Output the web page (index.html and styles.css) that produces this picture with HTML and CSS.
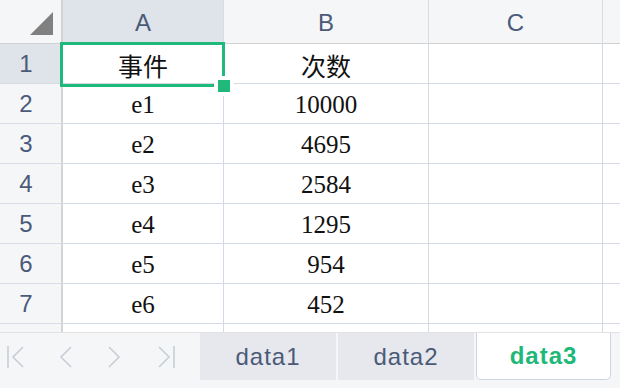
FILE: index.html
```html
<!DOCTYPE html>
<html>
<head>
  <title>Sheet</title>
  <link rel="stylesheet" href="styles.css">
</head>
<body>

  <div class="sheet">
    <!-- Grid -->
    <div class="grid">
      <div class="corner"><span class="corner-mark"></span></div>
      <div class="col-head selected">A</div>
      <div class="col-head">B</div>
      <div class="col-head">C</div>
      <div class="col-head last"></div>

      <div class="row-head selected">1</div>
      <div class="cell">事件</div>
      <div class="cell">次数</div>
      <div class="cell"></div>
      <div class="cell last"></div>

      <div class="row-head">2</div>
      <div class="cell">e1</div>
      <div class="cell">10000</div>
      <div class="cell"></div>
      <div class="cell last"></div>

      <div class="row-head">3</div>
      <div class="cell">e2</div>
      <div class="cell">4695</div>
      <div class="cell"></div>
      <div class="cell last"></div>

      <div class="row-head">4</div>
      <div class="cell">e3</div>
      <div class="cell">2584</div>
      <div class="cell"></div>
      <div class="cell last"></div>

      <div class="row-head">5</div>
      <div class="cell">e4</div>
      <div class="cell">1295</div>
      <div class="cell"></div>
      <div class="cell last"></div>

      <div class="row-head">6</div>
      <div class="cell">e5</div>
      <div class="cell">954</div>
      <div class="cell"></div>
      <div class="cell last"></div>

      <div class="row-head">7</div>
      <div class="cell">e6</div>
      <div class="cell">452</div>
      <div class="cell"></div>
      <div class="cell last"></div>

      <div class="row-head">8</div>
      <div class="cell"></div>
      <div class="cell"></div>
      <div class="cell"></div>
      <div class="cell last"></div>

      <!-- selection box over A1 -->
      <div class="selection"></div>
      <div class="fill-handle"></div>
    </div>

    <!-- Sheet tabs -->
    <div class="tabbar">
      <div class="nav">
        <svg width="20" height="24" viewBox="0 0 20 24"><path d="M2 1v22M17 2L7 12l10 10" fill="none" stroke="#c9cdd5" stroke-width="1.6"/></svg>
        <svg width="14" height="24" viewBox="0 0 14 24"><path d="M12 2L2 12l10 10" fill="none" stroke="#c9cdd5" stroke-width="1.6"/></svg>
        <svg width="14" height="24" viewBox="0 0 14 24"><path d="M2 2l10 10L2 22" fill="none" stroke="#c9cdd5" stroke-width="1.6"/></svg>
        <svg width="20" height="24" viewBox="0 0 20 24"><path d="M2 2l10 10L2 22M17 1v22" fill="none" stroke="#c9cdd5" stroke-width="1.6"/></svg>
      </div>
      <div class="tab">data1</div>
      <div class="tab">data2</div>
      <div class="tab active">data3</div>
    </div>
  </div>

</body>
</html>
```

FILE: styles.css
```css
body {
  margin: 0;
  background-color: #ffffff;
  font-family: "Liberation Sans", Arial, sans-serif;
}

.sheet {
  width: 620px;
  height: 388px;
  overflow: hidden;
  display: flex;
  flex-direction: column;
}

.grid {
  position: relative;
  display: grid;
  grid-template-columns: 63px 161px 205px 174px 1fr;
  grid-template-rows: 44px repeat(8, 40px);
  height: 332px;
  overflow: hidden;
  flex-shrink: 0;
}

.grid > div {
  box-sizing: border-box;
}

.corner {
  background-color: #f5f6f8;
  border-right: 2px solid #d4d4d4;
  border-bottom: 1px solid #d2d2d2;
  position: relative;
}

.corner-mark {
  position: absolute;
  left: 30px;
  top: 12px;
  width: 0;
  height: 0;
  border-left: 23px solid transparent;
  border-bottom: 23px solid #808080;
}

.col-head {
  background-color: #f5f6f8;
  border-right: 1px solid #dcdcdc;
  border-bottom: 1px solid #d2d2d2;
  color: #4b5a78;
  font-size: 24px;
  display: flex;
  align-items: center;
  justify-content: center;
  padding-top: 2px;
}

.row-head {
  background-color: #f5f6f8;
  border-right: 2px solid #d4d4d4;
  border-bottom: 1px solid #d8dce4;
  color: #4b5a78;
  font-size: 24px;
  display: flex;
  align-items: center;
  justify-content: center;
  padding-right: 9px;
  padding-top: 1px;
}

.selected {
  background-color: #dfe3ea;
}

.cell {
  border-right: 1px solid #d3dae6;
  border-bottom: 1px solid #d3dae6;
  font-family: "Liberation Serif", "Noto Sans CJK SC", serif;
  font-size: 25px;
  color: #111111;
  display: flex;
  align-items: center;
  justify-content: center;
  padding-top: 2px;
}

.last {
  border-right: none;
}

.selection {
  position: absolute;
  left: 60px;
  top: 42px;
  width: 165px;
  height: 45px;
  border: 3px solid #20b97b;
}

.fill-handle {
  position: absolute;
  left: 218px;
  top: 80px;
  width: 12px;
  height: 12px;
  background-color: #20b97b;
  box-shadow: 0 0 0 4px #ffffff;
}

.tabbar {
  flex: 1;
  display: flex;
  align-items: flex-start;
  background-color: #f5f6f8;
  border-top: 1px solid #e2e2e2;
  box-sizing: border-box;
}

.nav {
  width: 200px;
  height: 48px;
  display: flex;
  align-items: center;
  padding-left: 6px;
  box-sizing: border-box;
}

.nav svg:nth-child(1) { margin-right: 33px; }
.nav svg:nth-child(2) { margin-right: 34px; }
.nav svg:nth-child(3) { margin-right: 36px; }

.tab {
  width: 136px;
  height: 47px;
  margin-right: 2px;
  background-color: #e6e8ee;
  color: #4b5a78;
  font-size: 24px;
  display: flex;
  align-items: center;
  justify-content: center;
  box-sizing: border-box;
  letter-spacing: 1px;
}

.tab.active {
  width: 135px;
  background-color: #ffffff;
  border: 1px solid #cdd6e6;
  border-top: none;
  border-radius: 0 0 5px 5px;
  color: #1fb87a;
  font-weight: bold;
}
```
